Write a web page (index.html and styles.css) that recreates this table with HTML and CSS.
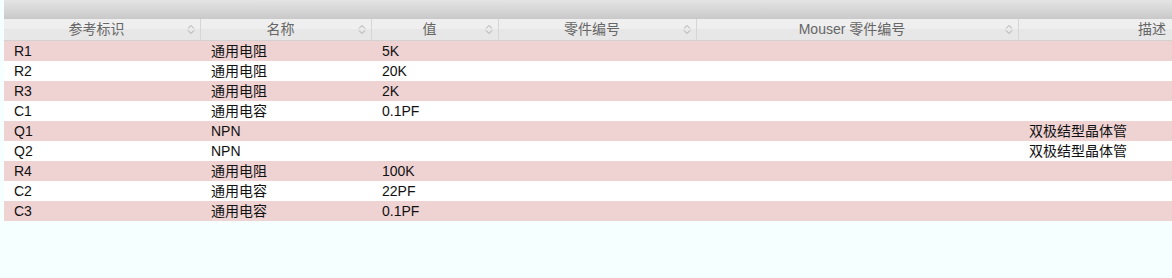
FILE: index.html
```html
<!DOCTYPE html>
<html lang="zh">
<head>
<meta charset="utf-8">
<title>BOM</title>
<link rel="stylesheet" href="styles.css">
</head>
<body>
<div class="frame">
  <div class="toolbar"></div>
  <div class="grid">
    <div class="row head">
      <div class="cell c1">参考标识<svg class="sort" width="8" height="11" viewBox="0 0 8 11"><path d="M1 4.5 L4 1.5 L7 4.5 M1 6.5 L4 9.5 L7 6.5"/></svg></div>
      <div class="cell c2">名称<svg class="sort" width="8" height="11" viewBox="0 0 8 11"><path d="M1 4.5 L4 1.5 L7 4.5 M1 6.5 L4 9.5 L7 6.5"/></svg></div>
      <div class="cell c3">值<svg class="sort" width="8" height="11" viewBox="0 0 8 11"><path d="M1 4.5 L4 1.5 L7 4.5 M1 6.5 L4 9.5 L7 6.5"/></svg></div>
      <div class="cell c4">零件编号<svg class="sort" width="8" height="11" viewBox="0 0 8 11"><path d="M1 4.5 L4 1.5 L7 4.5 M1 6.5 L4 9.5 L7 6.5"/></svg></div>
      <div class="cell c5">Mouser 零件编号<svg class="sort" width="8" height="11" viewBox="0 0 8 11"><path d="M1 4.5 L4 1.5 L7 4.5 M1 6.5 L4 9.5 L7 6.5"/></svg></div>
      <div class="cell c6">描述</div>
    </div>
    <div class="row odd"><div class="cell c1">R1</div><div class="cell c2">通用电阻</div><div class="cell c3">5K</div><div class="cell c4"></div><div class="cell c5"></div><div class="cell c6"></div></div>
    <div class="row even"><div class="cell c1">R2</div><div class="cell c2">通用电阻</div><div class="cell c3">20K</div><div class="cell c4"></div><div class="cell c5"></div><div class="cell c6"></div></div>
    <div class="row odd"><div class="cell c1">R3</div><div class="cell c2">通用电阻</div><div class="cell c3">2K</div><div class="cell c4"></div><div class="cell c5"></div><div class="cell c6"></div></div>
    <div class="row even"><div class="cell c1">C1</div><div class="cell c2">通用电容</div><div class="cell c3">0.1PF</div><div class="cell c4"></div><div class="cell c5"></div><div class="cell c6"></div></div>
    <div class="row odd"><div class="cell c1">Q1</div><div class="cell c2">NPN</div><div class="cell c3"></div><div class="cell c4"></div><div class="cell c5"></div><div class="cell c6">双极结型晶体管</div></div>
    <div class="row even"><div class="cell c1">Q2</div><div class="cell c2">NPN</div><div class="cell c3"></div><div class="cell c4"></div><div class="cell c5"></div><div class="cell c6">双极结型晶体管</div></div>
    <div class="row odd"><div class="cell c1">R4</div><div class="cell c2">通用电阻</div><div class="cell c3">100K</div><div class="cell c4"></div><div class="cell c5"></div><div class="cell c6"></div></div>
    <div class="row even"><div class="cell c1">C2</div><div class="cell c2">通用电容</div><div class="cell c3">22PF</div><div class="cell c4"></div><div class="cell c5"></div><div class="cell c6"></div></div>
    <div class="row odd"><div class="cell c1">C3</div><div class="cell c2">通用电容</div><div class="cell c3">0.1PF</div><div class="cell c4"></div><div class="cell c5"></div><div class="cell c6"></div></div>
  </div>
</div>
</body>
</html>
```
FILE: styles.css
```css
html, body {
  margin: 0;
  padding: 0;
  background: #f5ffff;
  overflow: hidden;
}
body {
  font-family: "Liberation Sans", "Noto Sans CJK SC", sans-serif;
  font-size: 14px;
  color: #111;
}
.frame {
  margin-left: 4px;
  width: 1168px;
  overflow: hidden;
}
.toolbar {
  height: 19px;
  background: linear-gradient(#e4e4e4, #c9c9c9);
}
.grid {
  display: flex;
  flex-direction: column;
  width: 1292px;
}
.row {
  display: flex;
  height: 20px;
}
.cell {
  flex: none;
  box-sizing: border-box;
  line-height: 20px;
  padding-left: 10px;
  white-space: nowrap;
  overflow: hidden;
}
.c1 { width: 197px; }
.c2 { width: 171px; }
.c3 { width: 127px; }
.c4 { width: 198px; }
.c5 { width: 322px; }
.c6 { width: 277px; }
.head {
  height: 22px;
  background: linear-gradient(#efefef 0, #efefef 50%, #e7e7e7 50%, #e7e7e7 100%);
  border-bottom: 1px solid #d2d2d2;
  box-sizing: border-box;
}
.head .cell {
  position: relative;
  padding: 0 11px 0 0;
  text-align: center;
  color: #666;
  line-height: 21px;
  border-right: 1px solid #d6d6d6;
}
.head .c6 { border-right: none; }
.sort {
  position: absolute;
  right: 5px;
  top: 5px;
  fill: none;
  stroke: #a8a8a8;
  stroke-width: 1;
}
.odd { background: #efd3d3; }
.even { background: #ffffff; }
```
